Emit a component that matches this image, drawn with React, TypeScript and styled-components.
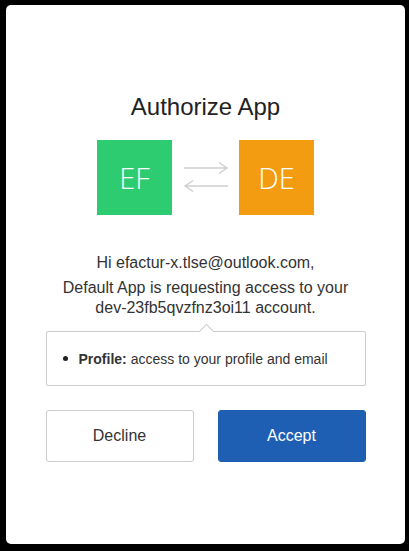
import React from "react";
import styled, { createGlobalStyle } from "styled-components";

const Global = createGlobalStyle`
  html, body { margin: 0; padding: 0; background: #000; }
  body { font-family: "Liberation Sans", Arial, sans-serif; }
`;

const Card = styled.div`
  box-sizing: border-box;
  margin: 5px 4px 0 6px;
  height: 539px;
  background: #fff;
  border-radius: 5px;
  display: flex;
  flex-direction: column;
  align-items: center;
  padding-top: 88px;
`;

const Title = styled.h1`
  margin: 0;
  font-size: 24px;
  line-height: 28px;
  font-weight: 400;
  color: #222;
`;

const LogoRow = styled.div`
  display: flex;
  align-items: center;
  margin-top: 19px;
`;

const Logo = styled.div<{ $bg: string }>`
  width: 75px;
  height: 75px;
  background: ${(p) => p.$bg};
  color: #fff;
  display: flex;
  align-items: center;
  justify-content: center;
  font-family: "Open Sans", sans-serif;
  font-weight: 300;
  font-size: 29px;
`;

const ArrowBox = styled.div`
  width: 67px;
  display: flex;
  justify-content: center;
`;

const Greeting = styled.p`
  margin: 38px 0 0;
  font-size: 16px;
  line-height: 20px;
  color: #333;
  text-align: center;
`;

const Request = styled.p`
  margin: 5px 0 0;
  font-size: 16px;
  line-height: 20px;
  color: #333;
  text-align: center;
  width: 320px;
`;

const Scopes = styled.div`
  position: relative;
  box-sizing: border-box;
  margin-top: 13px;
  width: 320px;
  height: 55px;
  border: 1px solid #ccc;
  border-radius: 2px;
  display: flex;
  align-items: center;
  padding-left: 16px;
  &::before {
    content: "";
    position: absolute;
    top: -6px;
    left: 154px;
    width: 10px;
    height: 10px;
    background: #fff;
    border-left: 1px solid #ccc;
    border-top: 1px solid #ccc;
    transform: rotate(45deg);
  }
`;

const ScopeItem = styled.div`
  display: flex;
  align-items: center;
  font-size: 14px;
  color: #333;
  &::before {
    content: "";
    width: 5px;
    height: 5px;
    border-radius: 50%;
    background: #222;
    margin-right: 11px;
  }
  b { font-weight: 700; margin-right: 4px; }
`;

const Buttons = styled.div`
  display: flex;
  gap: 24px;
  margin-top: 24px;
`;

const Button = styled.button<{ $primary?: boolean }>`
  box-sizing: border-box;
  width: 148px;
  height: 52px;
  border-radius: 3px;
  font-family: "Liberation Sans", Arial, sans-serif;
  font-size: 16px;
  cursor: pointer;
  border: 1px solid ${(p) => (p.$primary ? "#1e5fb4" : "#ccc")};
  background: ${(p) => (p.$primary ? "#1e5fb4" : "#fff")};
  color: ${(p) => (p.$primary ? "#fff" : "#333")};
`;

const Arrows = () => (
  <svg width="46" height="34" viewBox="0 0 46 34" fill="none" stroke="#cfcfcf" strokeWidth="1.4">
    <path d="M1 7 H44 M36 1.5 L44 7 L36 12.5" />
    <path d="M45 25 H2 M10 19.5 L2 25 L10 30.5" />
  </svg>
);

export default function App() {
  return (
    <>
      <Global />
      <Card>
        <Title>Authorize App</Title>
        <LogoRow>
          <Logo $bg="#2ecc71">EF</Logo>
          <ArrowBox>
            <Arrows />
          </ArrowBox>
          <Logo $bg="#f39c12">DE</Logo>
        </LogoRow>
        <Greeting>Hi efactur-x.tlse@outlook.com,</Greeting>
        <Request>
          Default App is requesting access to your dev-23fb5qvzfnz3oi11 account.
        </Request>
        <Scopes>
          <ScopeItem>
            <b>Profile:</b> access to your profile and email
          </ScopeItem>
        </Scopes>
        <Buttons>
          <Button>Decline</Button>
          <Button $primary>Accept</Button>
        </Buttons>
      </Card>
    </>
  );
}
